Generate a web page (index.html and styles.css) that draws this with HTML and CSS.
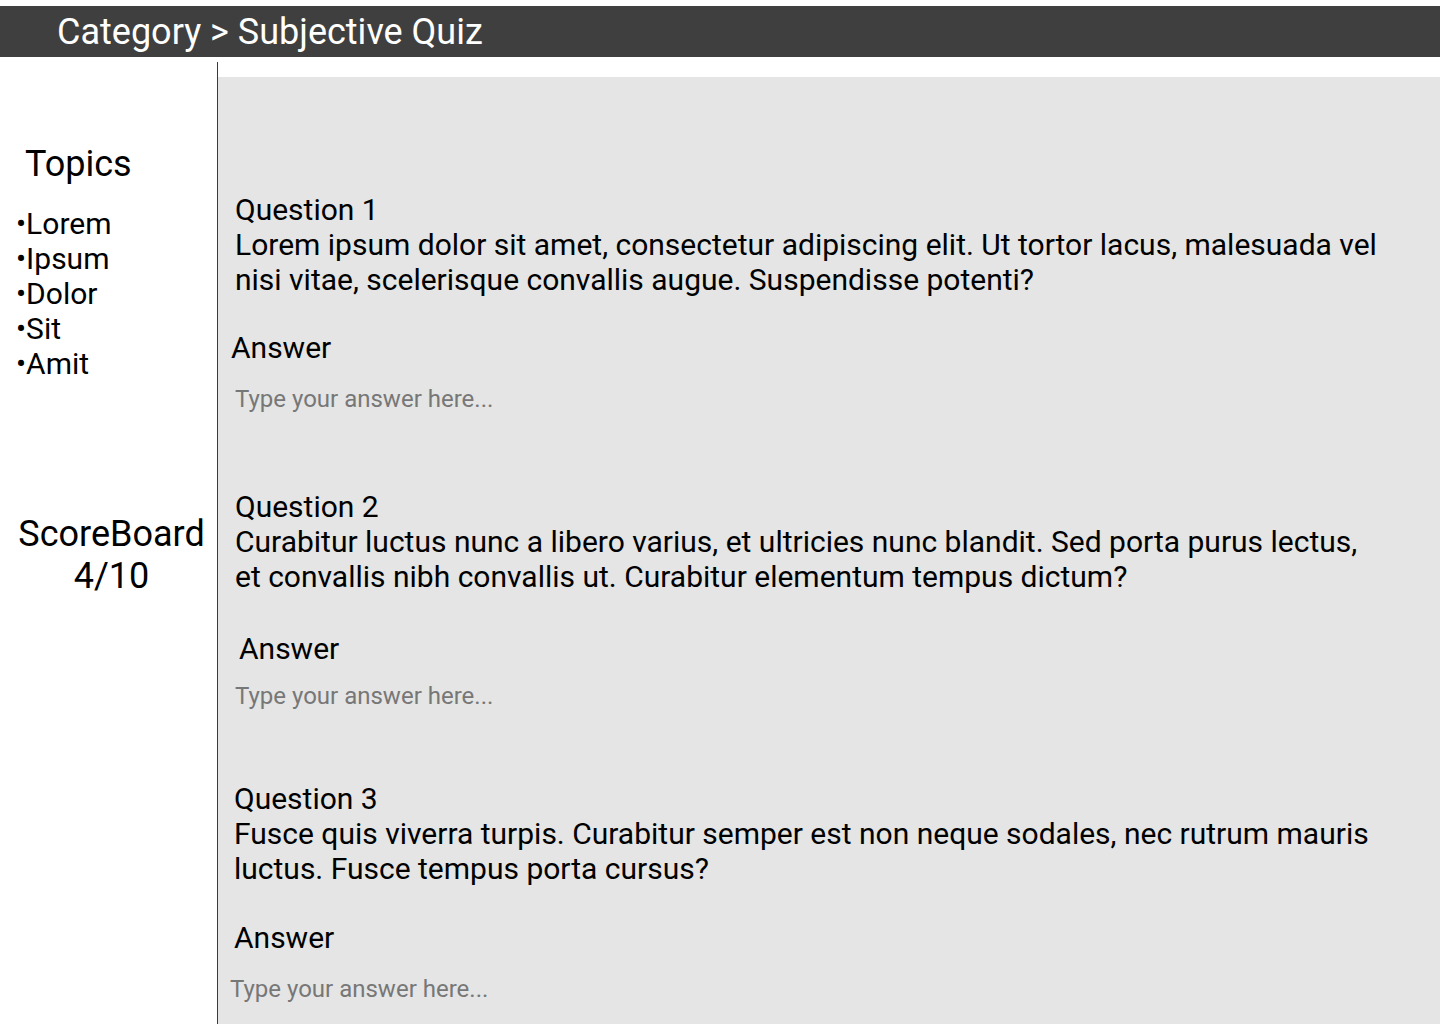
FILE: index.html
```html
<!DOCTYPE html>
<html lang="en">
<head>
<meta charset="utf-8">
<title>Subjective Quiz</title>
<link rel="stylesheet" href="styles.css">
</head>
<body>
<header class="topbar">Category &gt; Subjective Quiz</header>
<div class="layout">
  <aside class="sidebar">
    <h2 class="topics-title">Topics</h2>
    <ul class="topics">
      <li>•Lorem</li>
      <li>•Ipsum</li>
      <li>•Dolor</li>
      <li>•Sit</li>
      <li>•Amit</li>
    </ul>
    <div class="score">
      <div>ScoreBoard</div>
      <div>4/10</div>
    </div>
  </aside>
  <main class="main">
    <section class="question q1">
      <div class="q-title">Question 1</div>
      <p class="q-text">Lorem ipsum dolor sit amet, consectetur adipiscing elit. Ut tortor lacus, malesuada vel nisi vitae, scelerisque convallis augue. Suspendisse potenti?</p>
      <div class="answer-label a1">Answer</div>
      <input class="answer-input i1" type="text" placeholder="Type your answer here...">
    </section>
    <section class="question q2">
      <div class="q-title">Question 2</div>
      <p class="q-text">Curabitur luctus nunc a libero varius, et ultricies nunc blandit. Sed porta purus lectus, et convallis nibh convallis ut. Curabitur elementum tempus dictum?</p>
      <div class="answer-label a2">Answer</div>
      <input class="answer-input i2" type="text" placeholder="Type your answer here...">
    </section>
    <section class="question q3">
      <div class="q-title">Question 3</div>
      <p class="q-text">Fusce quis viverra turpis. Curabitur semper est non neque sodales, nec rutrum mauris luctus. Fusce tempus porta cursus?</p>
      <div class="answer-label a3">Answer</div>
      <input class="answer-input i3" type="text" placeholder="Type your answer here...">
    </section>
  </main>
</div>
</body>
</html>
```

FILE: styles.css
```css
* { box-sizing: border-box; }
html, body { margin: 0; padding: 0; }
body {
  font-family: Roboto, "Liberation Sans", sans-serif;
  color: #000;
  background: #fff;
  width: 1440px;
  height: 1024px;
  overflow: hidden;
}
.topbar {
  margin-top: 6px;
  height: 51px;
  overflow: hidden;
  background: #3f3f3f;
  color: #fff;
  font-size: 36px;
  line-height: 53px;
  padding-left: 57px;
}
.layout {
  display: flex;
  margin-top: 5px;
  height: 962px;
}
.sidebar {
  width: 218px;
  flex: none;
  border-right: 1px solid #3a3a3a;
  padding-top: 80px;
}
.topics-title {
  margin: 0 0 0 25px;
  font-size: 36px;
  font-weight: 400;
  line-height: 44px;
}
.topics {
  list-style: none;
  margin: 20px 0 0 16px;
  padding: 0;
  font-size: 30px;
  line-height: 35px;
}
.score {
  margin-top: 132px;
  text-align: center;
  font-size: 36px;
  line-height: 42px;
  padding-left: 6px;
}
.main {
  flex: 1;
  margin-top: 15px;
  background: #e4e5e4;
  padding: 115px 0 0 17px;
}
.question { width: 1150px; }
.q-title {
  font-size: 30px;
  line-height: 35px;
}
.q-text {
  margin: 0;
  font-size: 30px;
  line-height: 35px;
}
.answer-label {
  font-size: 30px;
  line-height: 35px;
  margin-top: 33px;
}
.a1 { margin-left: -4px; }
.a2 { margin-left: 4px; margin-top: 37px; }
.a3 { margin-top: 34px; }
.answer-input {
  display: block;
  width: 600px;
  border: none;
  background: transparent;
  font-family: Roboto, "Liberation Sans", sans-serif;
  font-size: 24px;
  line-height: 30px;
  height: 30px;
  padding: 0;
  margin-top: 17px;
  outline: none;
}
.answer-input::placeholder { color: #777; }
.i1 { margin-top: 19px; }
.i2 { margin-top: 15px; }
.i3 { margin-left: -4px; margin-top: 19px; }
.q2 { margin-top: 75px; }
.q3 { margin-top: 70px; margin-left: -1px; }
```
